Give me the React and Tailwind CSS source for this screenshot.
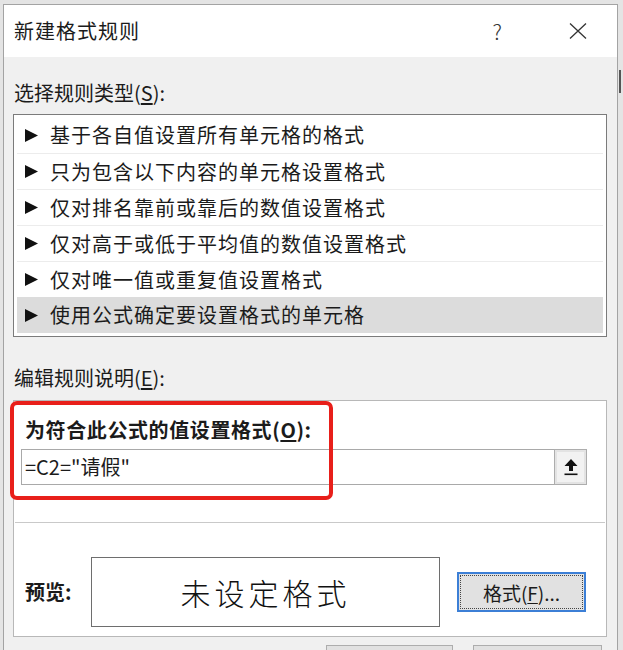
const rules = [
  "基于各自值设置所有单元格的格式",
  "只为包含以下内容的单元格设置格式",
  "仅对排名靠前或靠后的数值设置格式",
  "仅对高于或低于平均值的数值设置格式",
  "仅对唯一值或重复值设置格式",
  "使用公式确定要设置格式的单元格",
];

const font = { fontFamily: '"Noto Sans CJK SC", "Noto Sans", sans-serif' };

function Triangle() {
  return (
    <svg width="15" height="15" viewBox="0 0 15 15" className="shrink-0">
      <polygon points="1,1 14,7.5 1,14" fill="#111" />
    </svg>
  );
}

export default function App() {
  return (
    <div
      className="relative w-[623px] h-[650px] overflow-hidden bg-[#e4e4e4] text-[#1b1b1b]"
      style={font}
    >
      {/* backdrop mark on the right */}
      <div className="absolute left-[619px] top-[70px] w-[2px] h-[23px] bg-[#555]" />

      {/* Dialog */}
      <div className="ml-[3px] mt-[4px] w-[615px] h-[660px] border border-[#a3a3a3] bg-[#f0f0f0]">
        {/* Title bar */}
        <div className="h-[52px] bg-white flex items-center pl-[10px]">
          <span className="text-[20px] leading-none tracking-[1px]">新建格式规则</span>
          <span className="ml-auto text-[21px] font-light leading-none text-[#333] mr-[67px]">?</span>
          <svg width="18" height="16" viewBox="0 0 18 16" className="mr-[30px]">
            <path d="M1 0.5 L17 15.5 M17 0.5 L1 15.5" stroke="#333" strokeWidth="1.3" fill="none" />
          </svg>
        </div>

        {/* Body */}
        <div className="pt-[24px] pl-[9px] pr-[10px]">
          <div className="ml-[1px] h-[24px] leading-[24px] text-[20px]">
            选择规则类型(<u className="underline-offset-2">S</u>):
          </div>

          {/* Rule type list */}
          <div className="mt-[9px] border border-[#7b7b7b] bg-white pt-[2px] pb-[3px] px-[3px]">
            {rules.map((r, i) => (
              <div
                key={r}
                className={`h-[36px] flex items-center gap-[11px] pl-[7px] ${
                  i > 0 && i < 5 ? "border-t border-[#ececec]" : ""
                } ${i === 5 ? "bg-[#dcdcdc]" : ""}`}
              >
                <Triangle />
                <span className="text-[20px] leading-none tracking-[1px]">{r}</span>
              </div>
            ))}
          </div>

          <div className="mt-[29px] ml-[1px] h-[24px] leading-[24px] text-[20px]">
            编辑规则说明(<u className="underline-offset-2">E</u>):
          </div>

          {/* Edit panel */}
          <div className="relative mt-[10px] h-[237px] border border-[#b8b8b8] bg-white pt-[16px] pb-[9px]">
            <div className="ml-[11px] h-[26px] leading-[26px] text-[20px] font-bold tracking-[0.6px]">
              为符合此公式的值设置格式(<u className="underline-offset-2">O</u>):
            </div>

            <div className="mt-[6px] ml-[7px] mr-[19px] flex h-[36px]">
              <div className="flex-1 border border-[#a9a9a9] border-r-0 flex items-center pl-[3px] text-[20px] leading-none">
                =C2="请假"
              </div>
              <div className="w-[33px] border border-[#adadad] bg-[#e3e3e3] p-[2px]">
                <div className="h-full bg-[#f2f2f2] flex items-center justify-center">
                  <svg width="16" height="20" viewBox="0 0 16 20">
                    <path d="M8 2 L14.5 9 L10 9 L10 14 L6 14 L6 9 L1.5 9 Z" fill="#111" />
                    <rect x="1.5" y="16.5" width="13" height="1.6" fill="#111" />
                  </svg>
                </div>
              </div>
            </div>

            <div className="mt-[37px] mx-[1px] border-t border-[#c9c9c9]" />

            <div className="mt-[34px] flex items-center">
              <span className="ml-[11px] w-[66px] text-[20px] font-bold leading-none">预览:</span>
              <div className="w-[349px] h-[70px] border border-[#6e6e6e] flex items-center justify-center">
                <span className="text-[30px] font-light tracking-[4px] leading-none text-[#111]">未设定格式</span>
              </div>
              <div className="ml-[17px] w-[129px] h-[40px] border-2 border-[#3c7fd6] bg-[#e1e1e1] p-[1px]">
                <div className="h-full border border-dotted border-[#444] flex items-center justify-center text-[19px] leading-none">
                  格式(<u className="underline-offset-2">F</u>)...
                </div>
              </div>
            </div>

            {/* highlight */}
            <div className="absolute left-[-4px] top-0 w-[323px] h-[99px] border-[4px] border-[#e81f1a] rounded-[7px]" />
          </div>

          {/* bottom buttons, cut off */}
          <div className="mt-[8px] flex">
            <div className="ml-[313px] w-[127px] h-[40px] border border-[#adadad] bg-[#e1e1e1]" />
            <div className="ml-[20px] w-[129px] h-[40px] border border-[#adadad] bg-[#e1e1e1]" />
          </div>
        </div>
      </div>
    </div>
  );
}
